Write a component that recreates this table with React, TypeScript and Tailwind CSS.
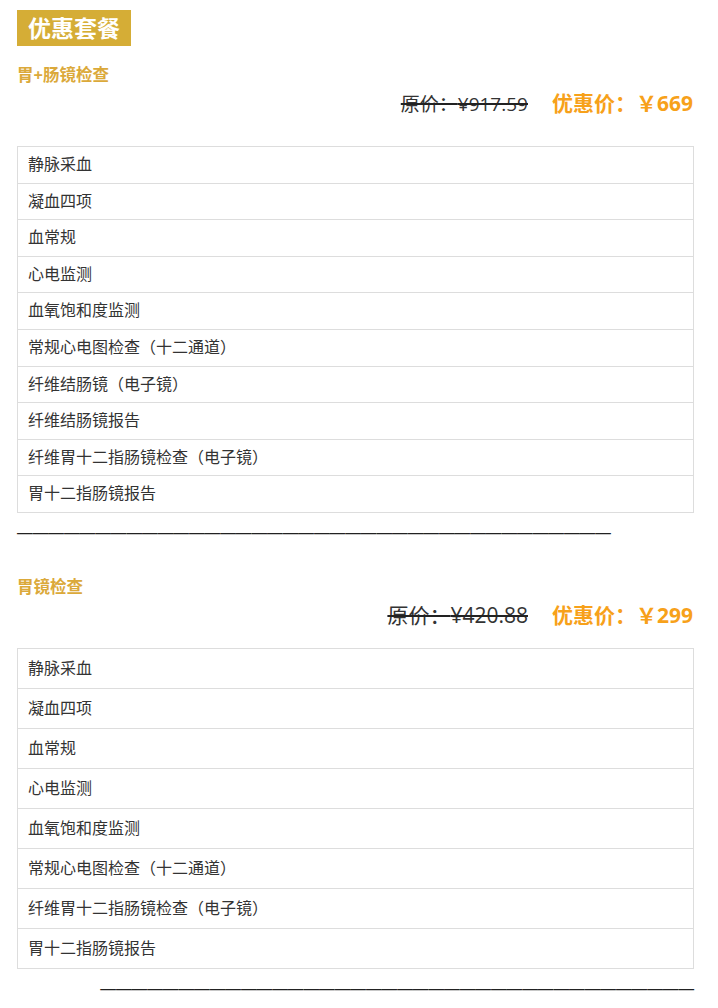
import React from 'react';

interface Pkg {
  title: string;
  original: string;
  price: string;
  items: string[];
  tall: boolean;
}

const packages: Pkg[] = [
  {
    title: '胃+肠镜检查',
    original: '¥917.59',
    price: '669',
    tall: false,
    items: [
      '静脉采血',
      '凝血四项',
      '血常规',
      '心电监测',
      '血氧饱和度监测',
      '常规心电图检查（十二通道）',
      '纤维结肠镜（电子镜）',
      '纤维结肠镜报告',
      '纤维胃十二指肠镜检查（电子镜）',
      '胃十二指肠镜报告',
    ],
  },
  {
    title: '胃镜检查',
    original: '¥420.88',
    price: '299',
    tall: true,
    items: [
      '静脉采血',
      '凝血四项',
      '血常规',
      '心电监测',
      '血氧饱和度监测',
      '常规心电图检查（十二通道）',
      '纤维胃十二指肠镜检查（电子镜）',
      '胃十二指肠镜报告',
    ],
  },
];

const DASHES = '—'.repeat(38);

export default function App() {
  return (
    <div className="min-h-screen bg-white pl-[17px] pr-[24px] pt-[10px] font-['Open_Sans','Noto_Sans_CJK_SC',sans-serif] text-[#333]">
      <div className="inline-block h-[36px] bg-[#d5ad36] px-[11px] text-[23px] font-bold leading-[36px] text-white">
        优惠套餐
      </div>

      {packages.map((pkg, idx) => (
        <div key={pkg.title}>
          <div
            className={
              (idx === 0 ? 'mt-[17px]' : 'mt-[30px]') +
              ' text-[16.5px] font-bold leading-[24px] text-[#dba93a]'
            }
          >
            {pkg.title}
          </div>

          {/* price line */}
          <div className="mt-[2px] flex h-[30px] items-center justify-end pr-[1px]">
            <span
              className={
                (idx === 0 ? 'text-[19px]' : 'text-[21px]') +
                ' line-through decoration-2 decoration-[#222]'
              }
            >
              原价：{pkg.original}
            </span>
            <span className="ml-[24px] text-[21px] font-bold text-[#f7a11a]">
              优惠价：￥{pkg.price}
            </span>
          </div>

          <div className={(idx === 0 ? 'mt-[27px]' : 'mt-[17px]') + ' border border-[#ddd]'}>
            {pkg.items.map((item, i) => (
              <div
                key={i}
                className={
                  (i > 0 ? 'border-t border-[#ddd] ' : '') +
                  (pkg.tall ? 'py-[8.5px] leading-[22px]' : 'py-[7px] leading-[21.6px]') +
                  ' px-[10px] text-[16px]'
                }
              >
                {item}
              </div>
            ))}
          </div>

          <div
            className={
              (idx === 0 ? 'text-left' : 'text-right') +
              " mt-[8px] whitespace-nowrap font-['Liberation_Sans',sans-serif] text-[15.63px] leading-[24px] text-[#222]"
            }
          >
            {DASHES}
          </div>
        </div>
      ))}
    </div>
  );
}
